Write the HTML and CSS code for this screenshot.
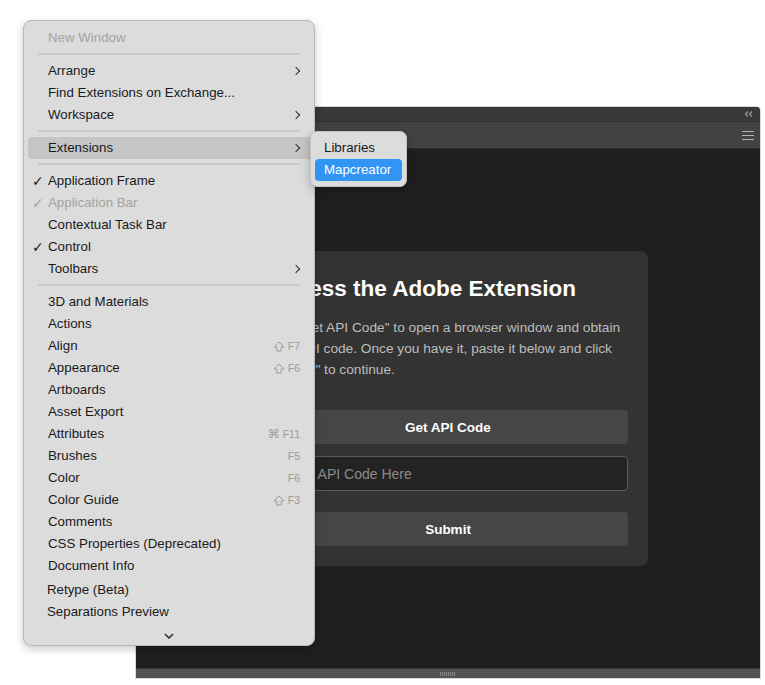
FILE: index.html
```html
<!DOCTYPE html>
<html lang="en">
<head>
    <meta charset="UTF-8">
    <meta name="viewport" content="width=device-width, initial-scale=1.0">
    <title>Window Menu - Mapcreator</title>
    <link rel="stylesheet" href="styles.css">
</head>
<body>
    <div class="panel">
        <div class="panel-top">
            <svg class="collapse" width="9" height="6" viewBox="0 0 9 6"><polyline points="4,0.5 1.5,3 4,5.5" /><polyline points="8,0.5 5.5,3 8,5.5" /></svg>
        </div>
        <div class="panel-tabs">
            <svg class="hamburger" width="12" height="9" viewBox="0 0 12 9"><line x1="0" y1="0.5" x2="12" y2="0.5" /><line x1="0" y1="4.5" x2="12" y2="4.5" /><line x1="0" y1="8.5" x2="12" y2="8.5" /></svg>
        </div>
        <div class="panel-body">
            <div class="card">
                <h2>Access the Adobe Extension</h2>
                <p>Use "Get API Code" to open a browser window and obtain your API code. Once you have it, paste it below and click "Submit" to continue.</p>
                <button type="button" class="btn">Get API Code</button>
                <input type="text" class="code-input" placeholder="Enter API Code Here">
                <button type="button" class="btn btn-submit">Submit</button>
            </div>
        </div>
        <div class="panel-bottom"><span class="grip"></span></div>
    </div>

    <div class="menu">
        <div class="item disabled">New Window</div>
        <div class="sep"></div>
        <div class="item">Arrange<span class="arrow"></span></div>
        <div class="item">Find Extensions on Exchange...</div>
        <div class="item">Workspace<span class="arrow"></span></div>
        <div class="sep"></div>
        <div class="item active">Extensions<span class="arrow"></span></div>
        <div class="sep"></div>
        <div class="item"><span class="check">✓</span>Application Frame</div>
        <div class="item disabled"><span class="check">✓</span>Application Bar</div>
        <div class="item">Contextual Task Bar</div>
        <div class="item"><span class="check">✓</span>Control</div>
        <div class="item">Toolbars<span class="arrow"></span></div>
        <div class="sep"></div>
        <div class="item">3D and Materials</div>
        <div class="item">Actions</div>
        <div class="item">Align<span class="key"><svg class="shift" width="12" height="11" viewBox="0 0 12 11"><path d="M6 1 L11 6 H8.2 V10 H3.8 V6 H1 Z" /></svg>F7</span></div>
        <div class="item">Appearance<span class="key"><svg class="shift" width="12" height="11" viewBox="0 0 12 11"><path d="M6 1 L11 6 H8.2 V10 H3.8 V6 H1 Z" /></svg>F6</span></div>
        <div class="item">Artboards</div>
        <div class="item">Asset Export</div>
        <div class="item">Attributes<span class="key"><span class="cmd">⌘</span>F11</span></div>
        <div class="item">Brushes<span class="key">F5</span></div>
        <div class="item">Color<span class="key">F6</span></div>
        <div class="item">Color Guide<span class="key"><svg class="shift" width="12" height="11" viewBox="0 0 12 11"><path d="M6 1 L11 6 H8.2 V10 H3.8 V6 H1 Z" /></svg>F3</span></div>
        <div class="item">Comments</div>
        <div class="item">CSS Properties (Deprecated)</div>
        <div class="item">Document Info</div>
        <div class="item shifted gap">Retype (Beta)</div>
        <div class="item shifted">Separations Preview</div>
        <div class="more">
            <svg width="10" height="6" viewBox="0 0 10 6"><polyline points="1,1 5,5 9,1" /></svg>
        </div>
    </div>

    <div class="submenu">
        <div class="sub-item">Libraries</div>
        <div class="sub-item selected">Mapcreator</div>
    </div>
</body>
</html>
```

FILE: styles.css
```css
body {
    margin: 0;
    width: 765px;
    height: 685px;
    position: relative;
    overflow: hidden;
    background-color: #ffffff;
    font-family: "Liberation Sans", Arial, sans-serif;
}

/* panel window */
.panel {
    position: absolute;
    left: 136px;
    top: 107px;
    width: 624px;
    height: 571px;
    display: flex;
    flex-direction: column;
    background-color: #1f1f1f;
    border-radius: 4px 4px 0 0;
    overflow: hidden;
    box-shadow: 0 0 0 1px rgba(0,0,0,0.15);
}
.panel-top {
    height: 14px;
    background-color: #383838;
    border-bottom: 1px solid #2e2e2e;
    display: flex;
    justify-content: flex-end;
    align-items: center;
    padding-right: 7px;
}
.collapse polyline {
    fill: none;
    stroke: #9a9a9a;
    stroke-width: 1.2;
}
.panel-tabs {
    height: 26px;
    background-color: #424242;
    border-bottom: 1px solid #2b2b2b;
    display: flex;
    justify-content: flex-end;
    align-items: center;
    padding-right: 6px;
}
.hamburger line {
    stroke: #b4b4b4;
    stroke-width: 1.2;
}
.panel-body {
    flex: 1;
    display: flex;
    justify-content: center;
    align-items: center;
}
.panel-bottom {
    height: 9px;
    background-color: #535353;
    border-top: 1px solid #3a3a3a;
    display: flex;
    justify-content: center;
    align-items: center;
}
.grip {
    width: 16px;
    height: 4px;
    background: repeating-linear-gradient(90deg, #8a8a8a 0 1px, transparent 1px 2px);
}

/* card */
.card {
    width: 360px;
    padding: 25px 20px 20px;
    background-color: #333333;
    border-radius: 8px;
    display: flex;
    flex-direction: column;
}
.card h2 {
    margin: 0;
    font-size: 22.5px;
    line-height: 26px;
    font-weight: bold;
    color: #ffffff;
}
.card p {
    margin: 15px 0 30px;
    font-size: 13.7px;
    line-height: 21px;
    color: #bdbdbd;
}
.btn {
    height: 34px;
    border: none;
    border-radius: 4px;
    background-color: #464646;
    color: #ffffff;
    font-family: "Liberation Sans", Arial, sans-serif;
    font-size: 13.5px;
    font-weight: bold;
}
.btn-submit {
    margin-top: 21px;
}
.code-input {
    margin-top: 12px;
    height: 35px;
    box-sizing: border-box;
    padding: 0 12px;
    border: 1px solid #5a5a5a;
    border-radius: 4px;
    background-color: #232323;
    color: #ffffff;
    font-family: "Liberation Sans", Arial, sans-serif;
    font-size: 14px;
}
.code-input::placeholder {
    color: #8a8a8a;
}

/* window menu */
.menu {
    position: absolute;
    left: 23px;
    top: 20px;
    width: 292px;
    height: 626px;
    box-sizing: border-box;
    padding-top: 6px;
    background-color: #dcdcdc;
    border: 1px solid #b9b9b9;
    border-radius: 8px;
    box-shadow: 0 3px 10px rgba(0,0,0,0.22);
    font-size: 13.3px;
    color: #1a1a1a;
}
.item {
    position: relative;
    height: 22px;
    line-height: 22px;
    margin: 0 4px;
    padding-left: 20px;
    padding-right: 10px;
    border-radius: 4px;
    display: flex;
    align-items: center;
}
.item.active {
    background-color: #c5c5c5;
    margin-right: 0;
    border-radius: 4px 0 0 4px;
}
.item.disabled {
    color: #a3a3a3;
}
.item.shifted {
    padding-left: 19px;
}
.item.gap {
    margin-top: 2px;
}
.check {
    position: absolute;
    left: 4px;
    font-family: "DejaVu Sans", sans-serif;
    font-size: 14px;
}
.arrow {
    margin-left: auto;
    margin-right: 1px;
    width: 5px;
    height: 5px;
    border-right: 1.6px solid #2a2a2a;
    border-top: 1.6px solid #2a2a2a;
    transform: rotate(45deg);
}
.item.active .arrow {
    margin-right: 5px;
}
.key {
    margin-left: auto;
    display: flex;
    align-items: center;
    gap: 3px;
    font-size: 10.5px;
    color: #9b9b9b;
}
.shift path {
    fill: none;
    stroke: #9b9b9b;
    stroke-width: 1;
    stroke-linejoin: round;
}
.cmd {
    font-family: "DejaVu Sans", sans-serif;
    font-size: 12px;
}
.sep {
    height: 2px;
    margin: 4px 14px 5px;
    background-color: #c9c9c9;
}
.more {
    height: 22px;
    margin-top: 2px;
    display: flex;
    justify-content: center;
    align-items: center;
}
.more polyline {
    fill: none;
    stroke: #2a2a2a;
    stroke-width: 1.5;
}

/* extensions submenu */
.submenu {
    position: absolute;
    left: 310px;
    top: 131px;
    width: 97px;
    box-sizing: border-box;
    padding: 5px 4px;
    background-color: #dcdcdc;
    border: 1px solid #c2c2c2;
    border-radius: 7px;
    box-shadow: 0 3px 10px rgba(0,0,0,0.25);
    font-size: 13.3px;
    color: #1a1a1a;
}
.sub-item {
    height: 22px;
    line-height: 22px;
    padding-left: 9px;
    border-radius: 4px;
}
.sub-item.selected {
    background-color: #3195f6;
    color: #ffffff;
}
```
